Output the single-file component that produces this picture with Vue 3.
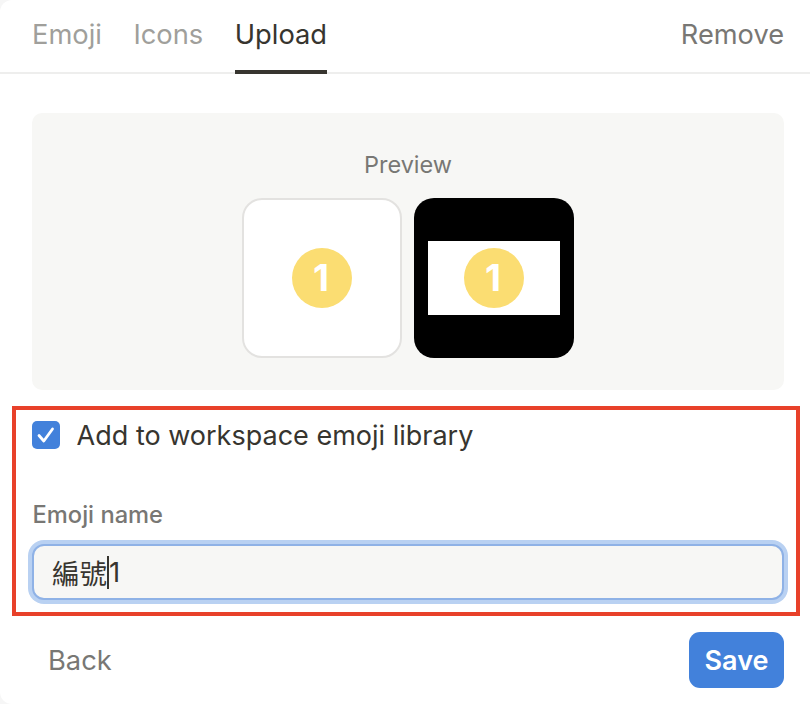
<script setup>
const tabs = [
  { label: 'Emoji', active: false },
  { label: 'Icons', active: false },
  { label: 'Upload', active: true }
]
</script>

<template>
  <div class="panel">
    <header class="tabbar">
      <nav class="tabs">
        <span v-for="t in tabs" :key="t.label" class="tab" :class="{ active: t.active }">{{ t.label }}</span>
      </nav>
      <span class="remove">Remove</span>
    </header>

    <section class="preview">
      <div class="preview-title">Preview</div>
      <div class="tiles">
        <div class="tile light">
          <span class="badge">1</span>
        </div>
        <div class="tile dark">
          <div class="strip"><span class="badge">1</span></div>
        </div>
      </div>
    </section>

    <section class="highlight">
      <div class="check-row">
        <span class="checkbox">
          <svg width="28" height="28" viewBox="0 0 28 28" fill="none">
            <path d="M7 14.5L11.8 20L20.5 8" stroke="#fff" stroke-width="2.8" stroke-linecap="round" stroke-linejoin="round" />
          </svg>
        </span>
        <span class="check-label">Add to workspace emoji library</span>
      </div>
      <div class="field-label">Emoji name</div>
      <div class="input"><span class="cjk">編號</span><span class="caret"></span><span class="digit">1</span></div>
    </section>

    <footer class="actions">
      <span class="back">Back</span>
      <span class="save">Save</span>
    </footer>
  </div>
</template>

<style>
html, body { margin: 0; background: #f6f6f6; }
</style>

<style scoped>
.panel {
  width: 810px;
  height: 704px;
  box-sizing: border-box;
  background: #fff;
  font-family: Inter, "Noto Sans CJK TC", sans-serif;
  color: #37352f;
  overflow: hidden;
  border-radius: 12px 0 0 12px;
}
.tabbar {
  height: 74px;
  box-sizing: border-box;
  display: flex;
  justify-content: space-between;
  padding: 0 26px 0 32px;
  border-bottom: 2px solid #eeeeed;
}
.tabs { display: flex; gap: 31.5px; }
.tab {
  font-size: 27.3px;
  line-height: 32px;
  padding-top: 19px;
  height: 74px;
  box-sizing: border-box;
  color: #a09f9b;
}
.tab.active {
  color: #37352f;
  border-bottom: 4px solid #37352f;
}
.remove {
  font-size: 27.2px;
  line-height: 32px;
  padding-top: 19px;
  color: #787774;
}
.preview {
  margin: 39px 26px 0 32px;
  height: 277px;
  box-sizing: border-box;
  background: #f7f7f5;
  border-radius: 10px;
  padding-top: 38px;
}
.preview-title {
  text-align: center;
  font-size: 23.5px;
  line-height: 28px;
  color: #787774;
}
.tiles {
  display: flex;
  justify-content: center;
  gap: 12px;
  margin-top: 19px;
}
.tile {
  width: 160px;
  height: 160px;
  box-sizing: border-box;
  border-radius: 20px;
  display: flex;
  align-items: center;
  justify-content: center;
}
.tile.light {
  background: #fff;
  border: 2px solid #e3e2e0;
}
.tile.dark { background: #000; }
.strip {
  width: 132px;
  height: 74px;
  background: #fff;
  display: flex;
  align-items: center;
  justify-content: center;
}
.badge {
  width: 60px;
  height: 60px;
  border-radius: 50%;
  background: #fbdd72;
  color: #fff;
  font-weight: 700;
  font-size: 37px;
  line-height: 60px;
  text-align: center;
  text-indent: -2px;
}
.highlight {
  margin: 16px 10px 0 12px;
  height: 210px;
  box-sizing: border-box;
  border: 4px solid #e8412a;
  padding: 11px 10px 0 16px;
}
.check-row {
  display: flex;
  align-items: center;
  gap: 16.6px;
  height: 28px;
}
.checkbox {
  width: 28px;
  height: 28px;
  border-radius: 5px;
  background: #4281db;
  display: block;
}
.checkbox svg { display: block; }
.check-label {
  font-size: 27px;
  line-height: 30px;
  padding-top: 2px;
  color: #37352f;
}
.field-label {
  margin: 52px 0 0 0.5px;
  font-size: 23.7px;
  line-height: 28px;
  font-weight: 500;
  color: #787774;
}
.input {
  margin-top: 15px;
  height: 56px;
  width: 752px;
  box-sizing: border-box;
  background: #f7f7f5;
  border: 2px solid #8fb2e6;
  box-shadow: 0 0 0 4px #b9d1f2;
  border-radius: 12px;
  display: flex;
  align-items: center;
  padding-left: 18px;
  font-size: 27.5px;
  color: #37352f;
}
.caret {
  width: 2px;
  height: 33px;
  background: #37352f;
}
.digit { margin-left: 0; }
.actions {
  display: flex;
  justify-content: space-between;
  align-items: center;
  margin: 16px 26px 0 48px;
}
.back {
  font-size: 27.3px;
  color: #787774;
}
.save {
  width: 95px;
  height: 56px;
  border-radius: 11px;
  background: #4281db;
  color: #fff;
  font-size: 27px;
  font-weight: 600;
  line-height: 58px;
  text-align: center;
}
</style>
